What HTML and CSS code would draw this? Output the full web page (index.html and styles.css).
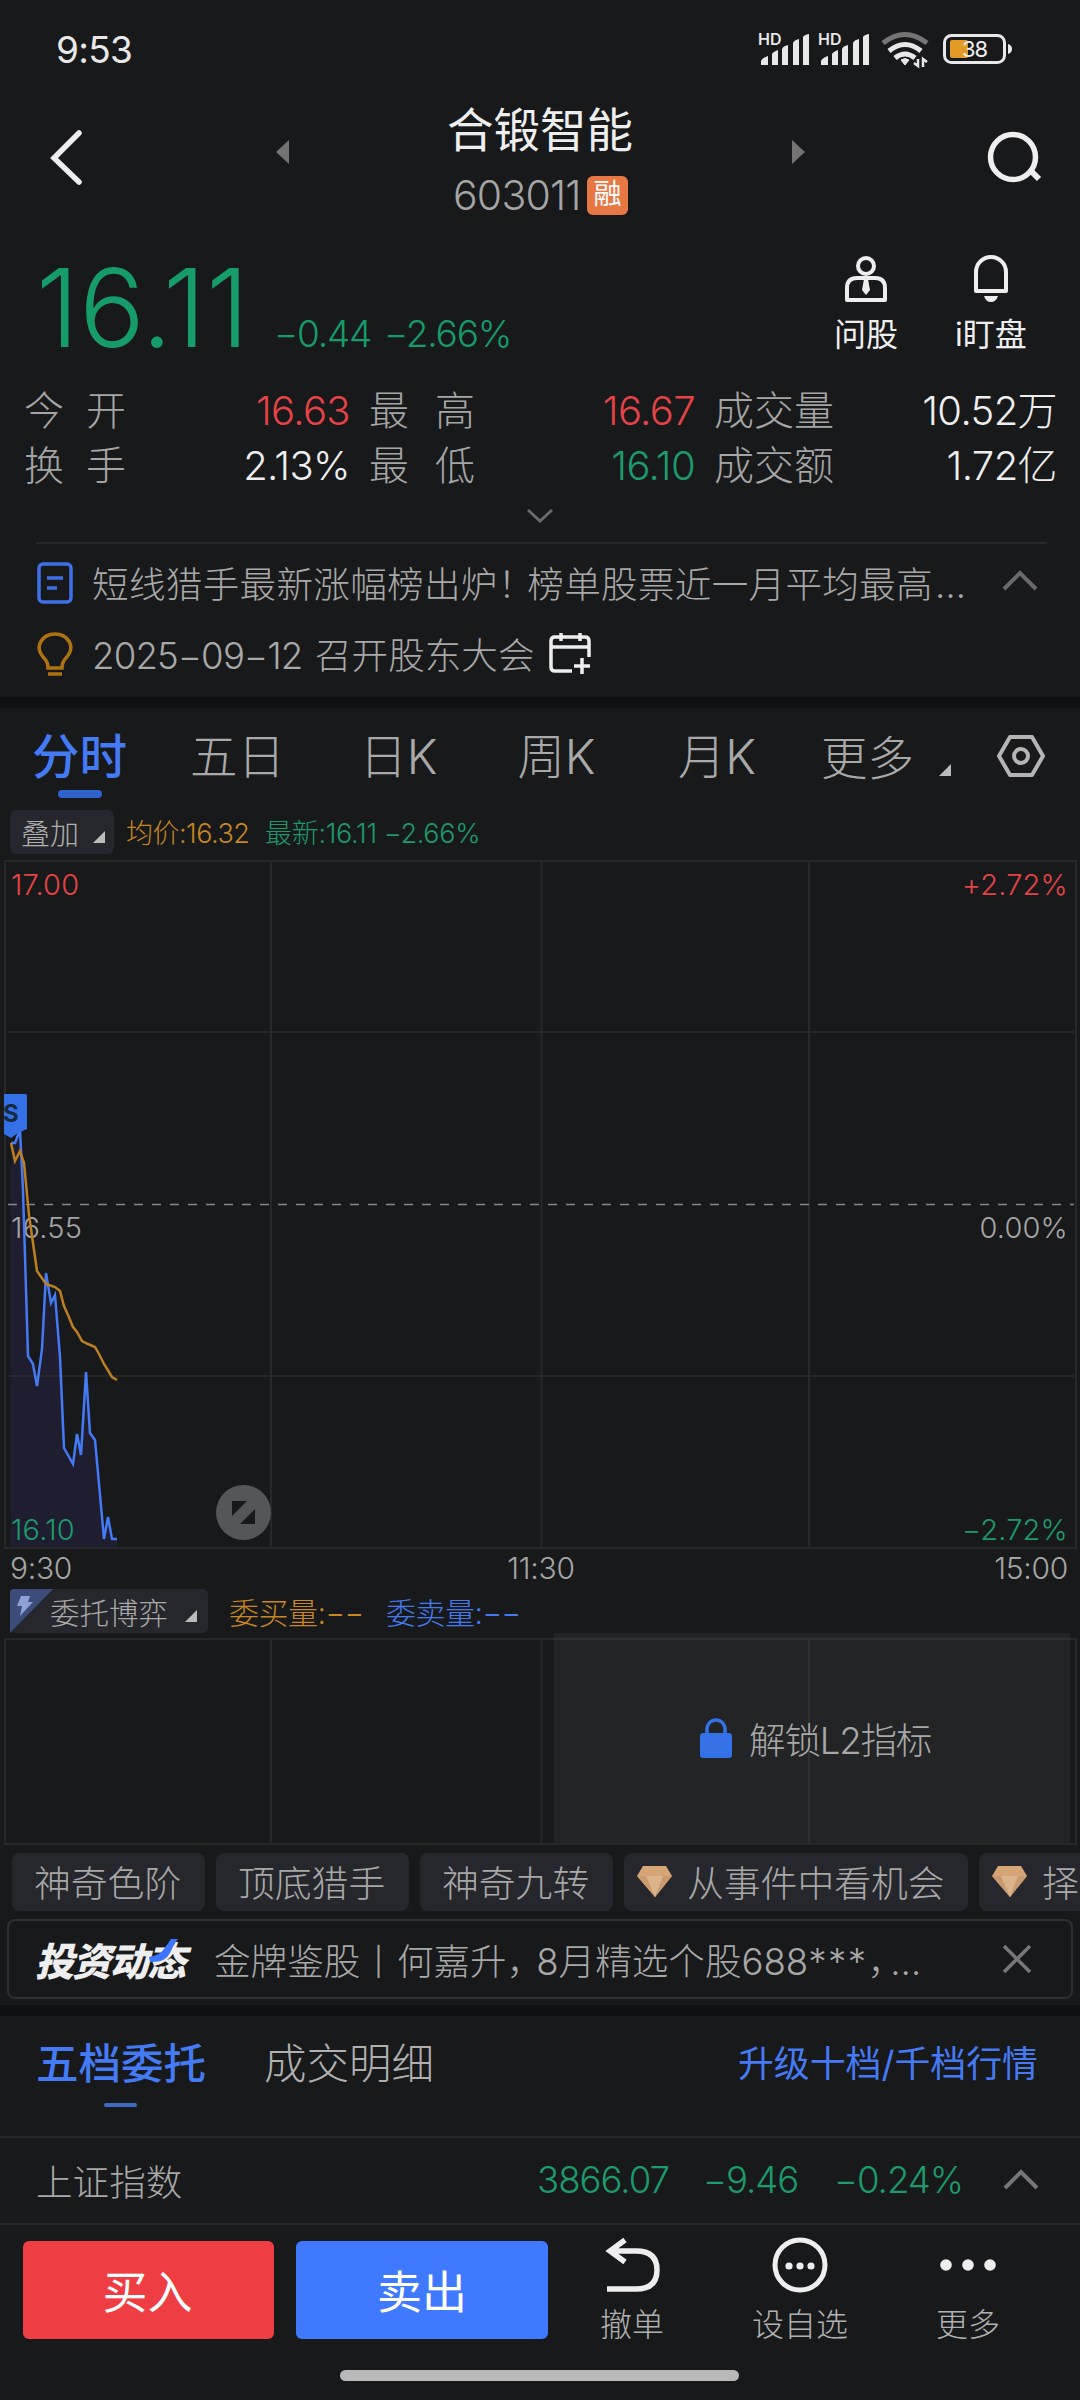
FILE: index.html
```html
<!DOCTYPE html>
<html lang="zh-CN">
<head>
<meta charset="utf-8">
<title>合锻智能 603011</title>
<link rel="stylesheet" href="styles.css">
</head>
<body>
<div class="screen">
  <header class="status">
    <span class="clock">9:53</span>
    <svg class="status-icons" width="258" height="44" viewBox="756 28 258 44">
      <g fill="#e8e8e8">
        <text class="hd" x="758" y="45">HD</text>
        <path id="bars" d="M761 65v-4q1-3 7-5v9zM772 65V54q1-2 6-4v15zM782 65V49q1-3 6-4v20zM793 65V43q1-3 6-4v26zM803 65V37q1-2 6-3v31z"/>
        <text class="hd" x="818" y="45">HD</text>
        <use href="#bars" x="60"/>
        <path d="M905 65l-4-5q4-3 8 0z" stroke="#e8e8e8"/>
      </g>
      <g fill="none" stroke="#e8e8e8" stroke-width="5">
        <path d="M883 43q22-17 44 0" stroke="#757575"/>
        <path d="M889 51q16-13 32 0"/>
        <path d="M895 58q10-8 20 0"/>
        <path d="M918 59v7l-4-3M923 67v-8l4 3" stroke-width="2.500"/>
        <rect x="944.500" y="35.500" width="60" height="27" rx="7" stroke-width="3"/>
      </g>
      <rect x="950" y="40" width="18" height="18" rx="2" fill="#e29b26"/>
      <path d="M1008 44q4 1 4 5t-4 5z" fill="#e8e8e8"/>
      <text class="battery" x="962" y="57">38</text>
    </svg>
  </header>

  <nav class="titlebar">
    <svg width="44" height="64" viewBox="0 0 44 64"><path d="M38 8L13 33L38 57" fill="none" stroke="#eee" stroke-width="5.500" stroke-linecap="round"/></svg>
    <svg class="prev" width="14" height="24"><path d="M13 0v24L0 12z" fill="#747474"/></svg>
    <div class="stock">
      <h1>合锻智能</h1>
      <div class="code"><span>603011</span><b>融</b></div>
    </div>
    <svg class="next" width="14" height="24"><path d="M0 0v24l13-12z" fill="#747474"/></svg>
    <svg class="search" width="62" height="60" viewBox="0 0 62 60"><circle cx="30" cy="29" r="22.500" fill="none" stroke="#eee" stroke-width="5.500"/><path d="M48 43l8 8" stroke="#eee" stroke-width="6"/></svg>
  </nav>

  <section class="quote">
    <span class="price">16.11</span>
    <span class="change"><i>−0.44</i><i>−2.66%</i></span>
    <div class="action">
      <svg width="50" height="50" viewBox="0 0 50 50" fill="none" stroke="#eee" stroke-width="4"><circle cx="25" cy="12" r="8"/><path d="M6 46V34q0-10 10-10h18q10 0 10 10v12z" stroke-linejoin="round"/><path d="M23 25h4l2 11-4 5-4-5z" fill="#eee" stroke="none"/></svg>
      <span>问股</span>
    </div>
    <div class="action watch">
      <svg width="50" height="50" viewBox="0 0 50 50"><path d="M10 37V18a15 15 0 0 1 30 0v19z" fill="none" stroke="#eee" stroke-width="4" stroke-linejoin="round"/><path d="M18 42h14q-2 6-7 6t-7-6" fill="#eee"/></svg>
      <span>i盯盘</span>
    </div>
  </section>

  <section class="stats">
    <div class="cell"><label><s>今</s><s>开</s></label><span class="red">16.63</span></div>
    <div class="cell"><label><s>最</s><s>高</s></label><span class="red">16.67</span></div>
    <div class="cell"><label>成交量</label><span>10.52万</span></div>
    <div class="cell"><label><s>换</s><s>手</s></label><span>2.13%</span></div>
    <div class="cell"><label><s>最</s><s>低</s></label><span class="green">16.10</span></div>
    <div class="cell"><label>成交额</label><span>1.72亿</span></div>
  </section>
  <svg class="expand" width="30" height="18" viewBox="0 0 30 18"><path d="M3 3l12 11L27 3" fill="none" stroke="#6b6b6c" stroke-width="3"/></svg>

  <section class="notices">
    <div class="notice">
      <svg width="38" height="44" viewBox="0 0 38 44" fill="none" stroke="#3f70e8" stroke-width="3.500"><rect x="3" y="3" width="32" height="38" rx="4"/><path d="M11 17h16M11 27h10"/></svg>
      <p class="headline">短线猎手最新涨幅榜出炉<i class="tight">！</i>榜单股票近一月平均最高<i class="dots">…</i></p>
      <svg class="fold" width="38" height="24" viewBox="0 0 38 24"><path d="M3 20L19 4l16 16" fill="none" stroke="#6b6b6c" stroke-width="4"/></svg>
    </div>
    <div class="notice">
      <svg width="38" height="46" viewBox="0 0 38 46" fill="none" stroke="#ad7311" stroke-width="3.500"><path d="M12 37q0-6-4-10C-3 15 7 3 19 3s22 12 11 24q-4 4-4 10zM12 43h14"/></svg>
      <p><span class="date">2025−09−12</span>召开股东大会</p>
      <svg class="calendar" width="42" height="42" viewBox="0 0 42 42" fill="none" stroke="#eee" stroke-width="3.500"><path d="M23 38H6q-4 0-4-4V8q0-4 4-4h30q4 0 4 4v16M2 14h38M12 0v8M31 0v8M33 25v16M25 33h16"/></svg>
    </div>
  </section>

  <nav class="periods">
    <span class="active">分时</span><span>五日</span><span>日K</span><span>周K</span><span>月K</span>
    <span class="more">更多<svg width="12" height="12"><path d="M12 0v12H0z" fill="#bbb"/></svg></span>
    <svg class="settings" width="50" height="46" viewBox="0 0 50 46" fill="none" stroke="#b5b5b5" stroke-width="4"><path d="M14 4h22l11 19-11 19H14L3 23z" stroke-linejoin="round"/><circle cx="25" cy="23" r="7"/></svg>
  </nav>

  <div class="legend top">
    <span class="pick">叠加<svg width="12" height="12"><path d="M12 0v12H0z" fill="#bbb"/></svg></span>
    <span class="orange avg">均价:16.32</span>
    <span class="green last">最新:16.11 −2.66%</span>
  </div>

  <svg class="chart" width="1080" height="734" viewBox="0 856 1080 734">
    <path d="M11 1143L15 1143L20 1130L23 1190L28 1356L33 1364L37 1386L42 1349L46 1273L51 1303L55 1295L60 1357L64 1448L73 1464L77 1434L81 1455L86 1372L90 1433L95 1440L99 1484L104 1539L108 1517L112 1539H117V1547H11z" fill="#1f1e30"/>
    <g fill="none" stroke="#26282a" stroke-width="2">
      <path d="M5 861H1076V1548H5zM271 861V1548M541.500 861V1548M809 861V1548"/>
      <path d="M8 1032H1074M8 1376H1074" stroke="#2b2c2d" stroke-width="1.500"/>
    </g>
    <path d="M8 1204.500H1074" stroke="#85888c" stroke-width="1.300" stroke-dasharray="9 9"/>
    <g class="axis">
      <text class="r" x="11" y="895">17.00</text><text class="r end" x="1068" y="895">+2.72%</text>
      <text x="11" y="1238">16.55</text><text class="end" x="1068" y="1238">0.00%</text>
      <text class="g" x="11" y="1540">16.10</text><text class="g end" x="1068" y="1540">−2.72%</text>
      <text class="t" x="10" y="1579">9:30</text><text class="t mid" x="541" y="1579">11:30</text><text class="t end" x="1068" y="1579">15:00</text>
    </g>
    <path d="M11 1143L15 1143L20 1130L23 1190L28 1356L33 1364L37 1386L42 1349L46 1273L51 1303L55 1295L60 1357L64 1448L73 1464L77 1434L81 1455L86 1372L90 1433L95 1440L99 1484L104 1539L108 1517L112 1539H117" fill="none" stroke="#447bf5" stroke-width="2.500"/>
    <path d="M11 1143L15 1161L20 1151L24 1163L29 1215L37 1271L46 1284L55 1287L60 1291L64 1306L68 1315L73 1327L77 1332L82 1341L88 1344L95 1347L99 1354L104 1364L112 1377L117 1380" fill="none" stroke="#bd7f22" stroke-width="2.500"/>
    <path d="M4 1094H25q2 0 2 2v33l-9 4-7 5-7-4z" fill="#3471e6"/>
    <text class="flag" x="3" y="1122">S</text>
    <circle cx="243.500" cy="1512.500" r="27.500" fill="#555657"/>
    <path d="M232 1501h15l-15 15zM255 1509v15h-15z" fill="#18191b"/>
  </svg>

  <div class="legend bottom">
    <span class="pick l2"><svg class="bolt" width="43" height="44"><path d="M0 4Q0 0 4 0H43L0 44z" fill="#3c4d7b"/><path d="M11 7h9l-2 6h5L10 27l2-10H7z" fill="#8fa2d8"/></svg>委托博弈<svg width="12" height="12"><path d="M12 0v12H0z" fill="#bbb"/></svg></span>
    <span class="orange buy">委买量:−−</span>
    <span class="blue sell">委卖量:−−</span>
  </div>

  <div class="panel">
    <svg width="1080" height="212" viewBox="0 1633 1080 212" fill="none" stroke="#26282a" stroke-width="2"><path d="M554 1633h516v211H554z" fill="#232426" stroke="none"/><path d="M5 1639H1076V1844H5zM271 1639V1844M541.500 1639V1844"/><path d="M809 1639V1844M554 1639h516" stroke="#2e3032"/></svg>
    <div class="unlock"><svg width="32" height="40"><path d="M7 17v-6a9 9 0 0 1 18 0v6" fill="none" stroke="#3471e6" stroke-width="3.500"/><rect y="15" width="32" height="25" rx="3" fill="#3471e6"/></svg>解锁L2指标</div>
  </div>

  <div class="chips">
    <span>神奇色阶</span><span>顶底猎手</span><span>神奇九转</span>
    <span class="gem"><svg width="35" height="31" viewBox="0 0 35 31"><path d="M6 0h23l6 10-17 21L0 10z" fill="#d5a477"/><path d="M0 10h35L18 31z" fill="#c79a70"/><path d="M9 10h17l-8 21z" fill="#dcb48c"/></svg>从事件中看机会</span>
    <span class="gem"><svg width="35" height="31" viewBox="0 0 35 31"><path d="M6 0h23l6 10-17 21L0 10z" fill="#d5a477"/><path d="M0 10h35L18 31z" fill="#c79a70"/><path d="M9 10h17l-8 21z" fill="#dcb48c"/></svg>择</span>
  </div>

  <div class="news">
    <strong>投资动态<svg width="30" height="26" viewBox="0 0 30 26"><path d="M22 0h7q-4 5-8 14-5 10-20 9l-1-5q11-2 15-8z" fill="#3d75ff"/></svg></strong>
    <p>金牌鉴股丨何嘉升<i class="tight">，</i>8月精选个股688<i class="stars">***</i><i class="tighter">，</i>…</p>
    <svg width="30" height="30"><path d="M2 2l26 26M28 2L2 28" stroke="#777" stroke-width="3.500"/></svg>
  </div>

  <nav class="depth">
    <span class="active">五档委托</span><span>成交明细</span><a>升级十档/千档行情</a>
  </nav>

  <section class="index">
    <span class="name">上证指数</span>
    <span class="green n1">3866.07</span><span class="green n2">−9.46</span><span class="green n3">−0.24%</span>
    <svg width="38" height="24" viewBox="0 0 38 24"><path d="M3 20L19 4l16 16" fill="none" stroke="#777" stroke-width="4"/></svg>
  </section>

  <footer class="trade">
    <button class="buy-btn">买入</button><button class="sell-btn">卖出</button>
    <div class="tool t1"><svg width="60" height="60" viewBox="0 0 60 60" fill="none" stroke="#eee" stroke-width="5.500"><path d="M23 6L8 17l15 11M8 17h26q21 0 21 19t-21 19H5" transform="translate(0 -2)"/></svg>撤单</div>
    <div class="tool t2"><svg width="60" height="60" viewBox="0 0 60 60"><circle cx="30" cy="29" r="25" fill="none" stroke="#eee" stroke-width="5"/><g fill="#eee"><circle cx="19" cy="30" r="3.600"/><circle cx="30" cy="30" r="3.600"/><circle cx="41" cy="30" r="3.600"/></g></svg>设自选</div>
    <div class="tool t3"><svg width="60" height="60" viewBox="0 0 60 60" fill="#eee"><circle cx="8" cy="29" r="5.800"/><circle cx="30" cy="29" r="5.800"/><circle cx="52" cy="29" r="5.800"/></svg>更多</div>
  </footer>
  <div class="home"></div>
</div>
</body>
</html>
```
FILE: styles.css
```css
* { box-sizing: border-box; margin: 0; padding: 0; }
body { background: #18191b; color: #eee; font-family: Inter, "Noto Sans CJK SC", sans-serif; font-weight: 300; }
.screen { width: 1080px; height: 2400px; overflow: hidden; display: flex; flex-direction: column; white-space: nowrap; }
.screen > * { flex: none; }
svg { display: block; flex: none; }
i, s { font-style: normal; text-decoration: none; }
.red { color: #e54346; }
.green { color: #1d9a6c; }
.orange { color: #c98621; }
.blue { color: #4479f0; }
.tight { letter-spacing: -7px; }
.tighter { letter-spacing: -14px; }
.dots { margin-left: 2px; letter-spacing: 2px; }

.status { height: 100px; padding: 0 66px 0 56px; display: flex; align-items: center; justify-content: space-between; }
.clock { font-size: 37px; font-weight: 400; letter-spacing: -0.7px; color: #e8e8e8; margin-top: -1px; }
.hd { font: 600 16px Inter; }
.battery { font: 400 22px Inter; fill: #eee; letter-spacing: -1px; }

.titlebar { height: 130px; padding: 0 35px 0 41px; display: flex; align-items: flex-start; }
.titlebar > svg { margin-top: 25px; }
.titlebar .prev { margin: 40px 0 0 191px; }
.titlebar .next { margin: 40px 0 0 161px; }
.titlebar .search { margin: 28px 0 0 auto; }
.stock { width: 184px; margin-left: 157px; }
h1 { font-size: 46.500px; line-height: 60px; font-weight: 400; }
.code { display: flex; align-items: center; gap: 7px; margin-left: 6px; height: 68px; color: #a5a5a5; font-size: 41px; padding-top: 2px; }
.code span { width: 127px; letter-spacing: -0.800px; }
.code b { width: 41px; height: 39px; border-radius: 6px; background: #e87843; color: #fff; font-size: 28px; font-weight: 400; line-height: 37px; text-align: center; flex: none; }

.quote { height: 153px; padding-left: 36px; display: flex; align-items: flex-start; }
.price { width: 238px; font-size: 109px; line-height: 154px; color: #159c6a; letter-spacing: 0.3px; font-weight: 300; }
.change { display: flex; gap: 13px; width: 537px; font-size: 37px; line-height: 208px; color: #159c6a; letter-spacing: -1.200px; }
.action { width: 110px; padding-top: 24px; display: flex; flex-direction: column; align-items: center; font-size: 32px; line-height: 42px; font-weight: 400; gap: 10px; }
.watch { margin-left: 15px; }

.stats { display: grid; grid-template-columns: 325px 325px 342px; column-gap: 20px; grid-auto-rows: 55px; padding: 0 23px 0 24px; }
.cell { display: flex; justify-content: space-between; align-items: center; font-size: 40px; line-height: 55px; }
.cell label { display: flex; gap: 22px; color: #a5a5a5; }
.cell:nth-child(3n+2) label { gap: 26px; }
.cell span { letter-spacing: -0.6px; margin-right: -1px; }
.expand { margin: 14px 0 0 525px; height: 18px; }

.notices { margin: 17px 33px 0 36px; border-top: 2px solid #26282a; height: 155px; padding-top: 3px; }
.notice { height: 71px; display: flex; align-items: center; font-size: 36.6px; color: #a8a8a8; }
.notice p { margin-left: 18px; }
.headline { width: 880px; letter-spacing: 0.3px; }
.fold { margin-left: auto; margin-top: -3px; margin-right: 8px; }
.date { display: inline-block; width: 223px; letter-spacing: -0.8px; }
.calendar { margin-left: 15px; }

.periods { border-top: 11px solid #0f1012; height: 113px; display: grid; grid-template-columns: 159px 157px 165px 151px 170px 188px 90px; align-items: center; font-size: 47.500px; color: #a9a9a9; }
.periods span { height: 102px; line-height: 98px; text-align: center; position: relative; }
.periods .active { color: #447bf5; font-weight: 500; }
.periods .active::after { content: ""; position: absolute; left: 58px; top: 82px; width: 44px; height: 8px; border-radius: 4px; background: #3162cc; }
.periods .more { display: flex; align-items: center; gap: 25px; padding: 0 0 3px 19px; font-size: 46.500px; }
.more svg { margin-top: 25px; }
.settings { margin: -6px 0 0 6px; }

.legend { display: flex; align-items: center; font-size: 27px; }
.legend.top { height: 46px; padding-bottom: 3px; }
.pick { margin-left: 10px; width: 104px; height: 44px; border-radius: 6px; background: #26272c; color: #b0b0b0; display: flex; align-items: center; gap: 14px; padding-left: 11px; font-size: 29px; }
.pick > svg:last-child { margin-top: 10px; }
.avg { margin-left: 12px; width: 139px; letter-spacing: -0.5px; }
.last { letter-spacing: -0.3px; }

.chart { margin-bottom: -3px; }
.axis { font-size: 29px; fill: #a5a5a5; letter-spacing: 0.2px; }
.axis .r { fill: #e54346; }
.axis .g { fill: #1d9a6c; }
.axis .t { font-size: 30px; letter-spacing: -0.3px; }
.axis .end { text-anchor: end; }
.axis .mid { text-anchor: middle; }
.flag { font: 700 24px Inter; fill: #17283f; }
.legend.bottom { height: 46px; padding-top: 2px; font-size: 30px; }
.pick.l2 { width: 198px; padding: 0; gap: 0; color: #a8a8a8; font-size: 29.500px; }
.l2 .bolt { margin-right: -3px; }
.l2 > svg:last-child { margin-left: 17px; }
.buy { margin-left: 21px; width: 157px; letter-spacing: -0.5px; }
.sell { letter-spacing: -0.5px; }

.panel { height: 220px; display: grid; }
.panel > * { grid-area: 1 / 1; }
.unlock { margin: 0 0 10px 700px; display: flex; align-items: center; gap: 17px; color: #a8a8a8; font-size: 36.6px; letter-spacing: -1.2px; }

.chips { display: flex; gap: 11px; padding-left: 12px; height: 58px; }
.chips span { flex: none; width: 193px; border-radius: 8px; background: #26272c; color: #a8a8a8; font-size: 36.8px; line-height: 61px; padding-left: 22px; }
.chips .gem { width: 344px; padding-left: 13px; display: flex; gap: 15px; }
.gem svg { margin-top: 13px; }

.news { margin: 8px 7px 6px; height: 80px; border: 2px solid #2e3032; border-radius: 8px; display: flex; align-items: center; padding-left: 26px; }
.news strong { font-size: 39px; font-weight: 900; font-style: italic; letter-spacing: -1.700px; width: 179px; position: relative; color: #eee; }
.news strong svg { position: absolute; left: 114px; top: 8px; }
.news p { width: 788px; color: #a8a8a8; font-size: 36.6px; }
.stars { letter-spacing: 1.500px; }

.depth { border-top: 11px solid #0f1012; height: 133px; display: flex; padding: 7px 42px 0 36px; font-size: 42.500px; line-height: 82px; color: #b0b0b0; border-bottom: 2px solid #26282a; }
.depth span { width: 228px; position: relative; }
.depth .active { color: #447bf5; font-weight: 500; }
.depth .active::after { content: ""; position: absolute; left: 68px; top: 80px; width: 33px; height: 4px; border-radius: 2px; background: #3e6ac5; }
.depth a { margin-left: auto; font-size: 35.9px; color: #447bf5; font-weight: 400; }

.index { height: 87px; border-bottom: 2px solid #26282a; display: flex; align-items: center; padding: 0 0 1px 36px; font-size: 36.6px; color: #a8a8a8; letter-spacing: -1px; }
.index .name { width: 501px; letter-spacing: 0; }
.n1 { width: 166px; }
.n2 { width: 131px; }
.n3 { width: 168px; }

.trade { height: 143px; padding: 16px 0 0 23px; display: flex; align-items: flex-start; }
.trade button { width: 251px; height: 98px; border: 0; border-radius: 6px; font: 400 45px "Noto Sans CJK SC", sans-serif; color: #fff; padding: 0 2px 2px 0; }
.buy-btn { background: #ee3e43; }
.trade .sell-btn { background: #3f79ff; margin-left: 22px; width: 252px; padding-right: 0; }
.tool { display: flex; flex-direction: column; align-items: center; font-size: 32px; line-height: 44px; gap: 7px; color: #b0b0b0; width: 110px; margin-top: -5px; }
.t1 { margin-left: 29px; }
.t2 { margin-left: 58px; }
.t3 { margin-left: 58px; }
.home { width: 399px; height: 11px; margin: 2px 0 0 340px; border-radius: 6px; background: #b9b9b9; }
```
